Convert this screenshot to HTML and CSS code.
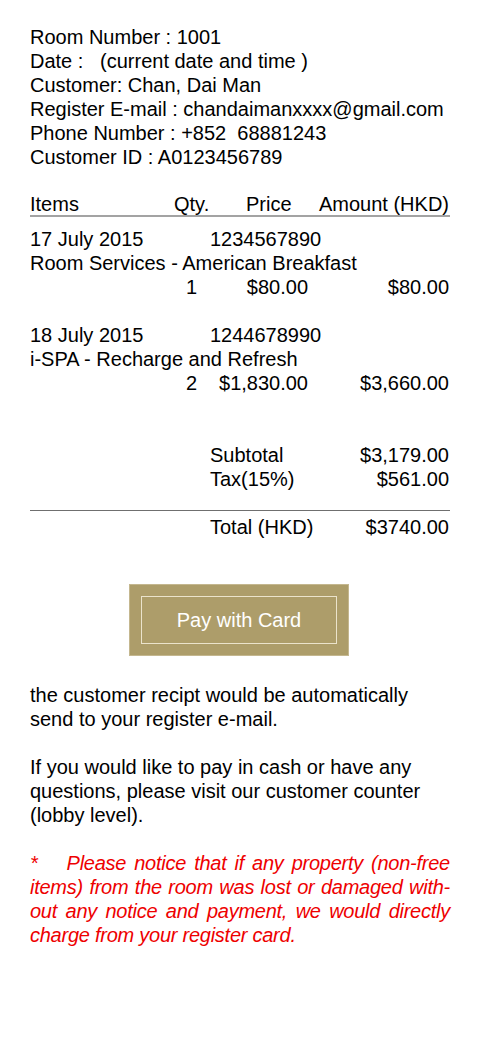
FILE: index.html
```html
<!DOCTYPE html>
<html>
<head>
<meta charset="utf-8">
<link rel="stylesheet" href="styles.css">
</head>
<body>
<div class="page">
  <div class="info">
    <div>Room Number : 1001</div>
    <div>Date : &nbsp;&nbsp;(current date and time )</div>
    <div>Customer: Chan, Dai Man</div>
    <div>Register E-mail : chandaimanxxxx@gmail.com</div>
    <div>Phone Number : +852 &nbsp;68881243</div>
    <div>Customer ID : A0123456789</div>
  </div>

  <div class="thead">
    <span class="h-items">Items</span>
    <span class="h-qty">Qty.</span>
    <span class="h-price">Price</span>
    <span class="h-amount">Amount (HKD)</span>
  </div>

  <div class="item">
    <div class="item-date"><span>17 July 2015</span><span>1234567890</span></div>
    <div>Room Services - American Breakfast</div>
    <div class="item-qty"><span>1</span><span>$80.00</span><span>$80.00</span></div>
  </div>

  <div class="item">
    <div class="item-date"><span>18 July 2015</span><span>1244678990</span></div>
    <div>i-SPA - Recharge and Refresh</div>
    <div class="item-qty"><span>2</span><span>$1,830.00</span><span>$3,660.00</span></div>
  </div>

  <div class="totals">
    <span>Subtotal</span><span class="num">$3,179.00</span>
    <span>Tax(15%)</span><span class="num">$561.00</span>
  </div>

  <div class="grand">
    <span>Total (HKD)</span><span class="num">$3740.00</span>
  </div>

  <div class="btn-wrap">
    <button class="pay-btn"><span class="pay-inner">Pay with Card</span></button>
  </div>

  <p class="note">the customer recipt would be automatically send to your register e-mail.</p>
  <p class="note">If you would like to pay in cash or have any questions, please visit our customer counter (lobby level).</p>
  <p class="warn"><span class="star">*</span>Please notice that if any property (non-free items) from the room was lost or damaged with-<wbr>out any notice and payment, we would directly charge from your register card.</p>
</div>
</body>
</html>
```

FILE: styles.css
```css
html, body {
  margin: 0;
  padding: 0;
  background: #ffffff;
}

body {
  font-family: "Liberation Sans", Arial, sans-serif;
  font-size: 20px;
  line-height: 24px;
  color: #000000;
}

.page {
  width: 420px;
  padding: 25px 30px 40px 30px;
}

.info {
  margin-bottom: 24px;
}

.thead {
  display: flex;
  line-height: 22px;
  border-bottom: 2px solid #a3a3a3;
  margin-bottom: 10px;
}

.h-items {
  width: 144px;
}

.h-qty {
  width: 72px;
}

.h-amount {
  margin-left: auto;
  padding-right: 1px;
}

.item {
  margin-bottom: 24px;
}

.item-date {
  display: grid;
  grid-template-columns: 180px 1fr;
}

.item-qty {
  display: grid;
  grid-template-columns: 167px 111px 1fr;
  text-align: right;
  padding-right: 1px;
}

.totals {
  display: grid;
  grid-template-columns: 1fr auto;
  padding-left: 180px;
  padding-right: 1px;
  margin-top: 48px;
  padding-bottom: 19px;
  border-bottom: 1px solid #6f6f6f;
}

.grand {
  display: grid;
  grid-template-columns: 1fr auto;
  padding-left: 180px;
  padding-right: 1px;
  margin-top: 4px;
}

.num {
  text-align: right;
}

.btn-wrap {
  display: flex;
  justify-content: center;
  margin-top: 45px;
}

.pay-btn {
  width: 220px;
  height: 72px;
  padding: 11px;
  margin: 0 0 0 -2px;
  border: 1px solid #c4b78f;
  background: #ad9d6a;
  font-family: "Liberation Sans", Arial, sans-serif;
  font-size: 20px;
  color: #ffffff;
  cursor: pointer;
}

.pay-inner {
  display: flex;
  align-items: center;
  justify-content: center;
  height: 100%;
  box-sizing: border-box;
  border: 1px solid #ebe3cc;
}

.note {
  margin: 27px 0 24px 0;
}

.note + .note {
  margin-top: 0;
}

.warn {
  margin: 0;
  color: #ee0000;
  font-style: italic;
  text-align: justify;
  letter-spacing: -0.25px;
}

.star {
  padding-right: 29px;
}
```
